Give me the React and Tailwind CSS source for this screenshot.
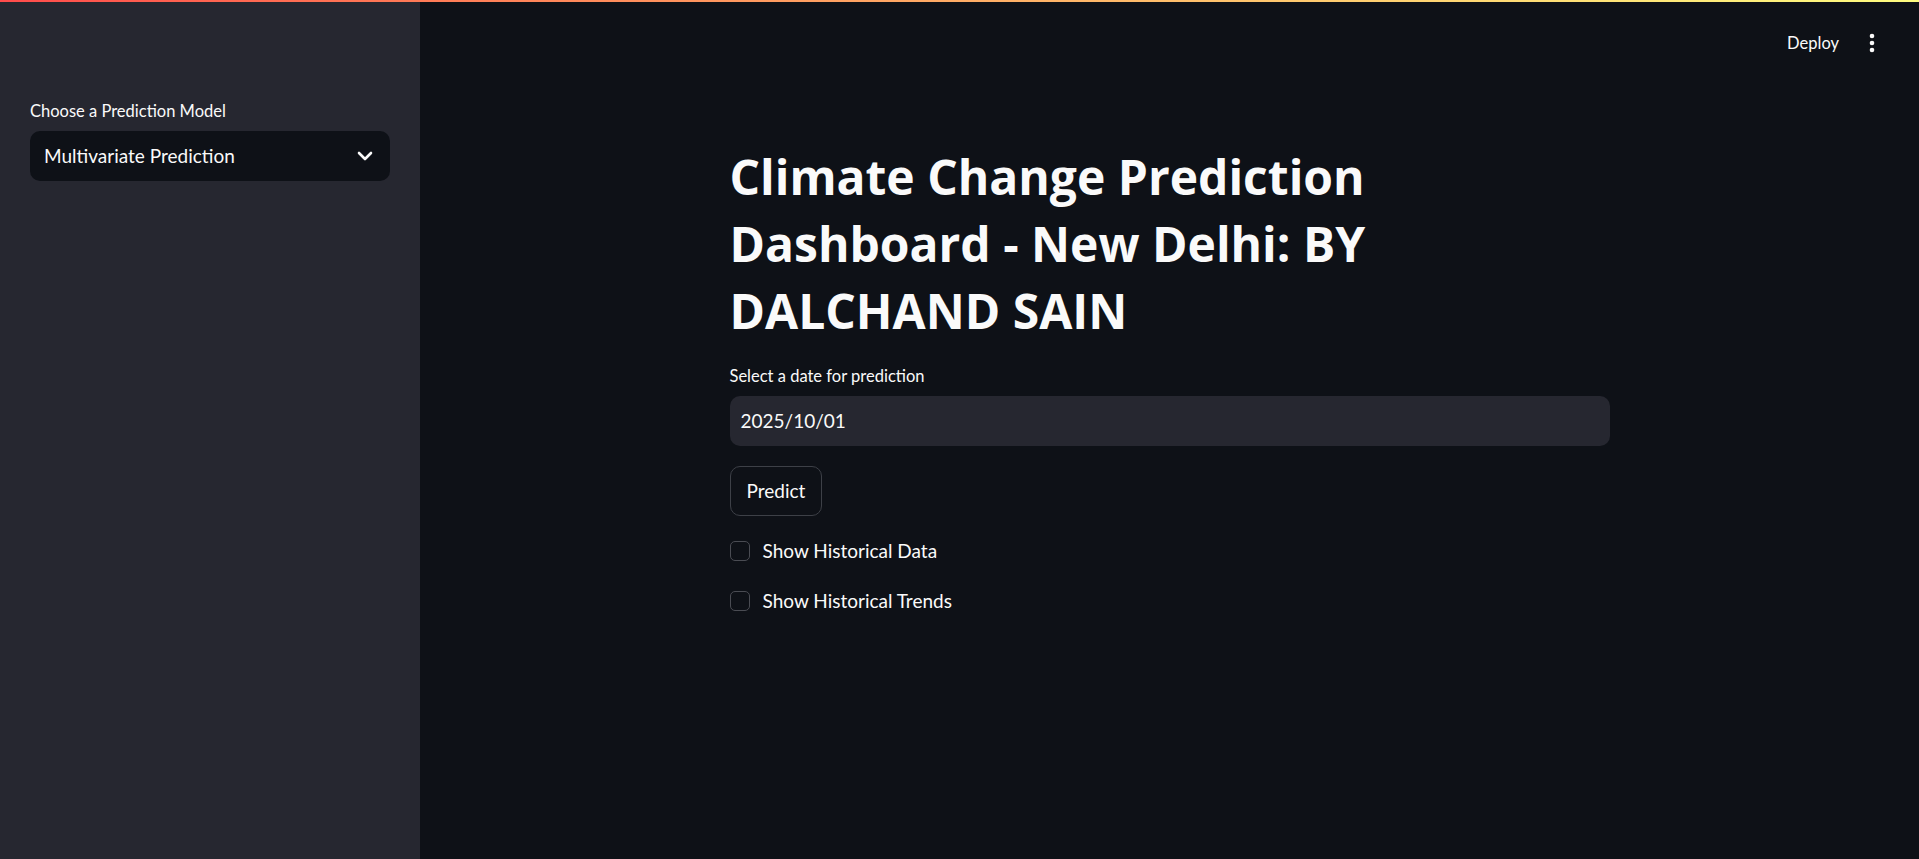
import React from 'react';

const ChevronDown = () => (
    <svg width="16" height="10" viewBox="0 0 16 10" fill="none">
        <path d="M2 2l6 6 6-6" stroke="#fafafa" strokeWidth="2.6" strokeLinecap="round" strokeLinejoin="round" />
    </svg>
);

const Kebab = () => (
    <svg width="6" height="20" viewBox="0 0 6 20" fill="#fafafa">
        <circle cx="3" cy="3" r="2.3" />
        <circle cx="3" cy="10" r="2.3" />
        <circle cx="3" cy="17" r="2.3" />
    </svg>
);

const Checkbox = ({ label }) => (
    <label className="flex items-center h-[30px] gap-[13px] cursor-pointer">
        <span className="w-[20px] h-[20px] rounded-[5px] border border-[#4a4c53] bg-[#0e1117]" />
        <span className="text-[19px] text-[#fafafa] leading-[30px]">{label}</span>
    </label>
);

const App = () => {
    return (
        <div className="flex flex-col h-screen w-full bg-[#0e1117] font-[Lato,sans-serif] text-[#fafafa] overflow-hidden">
            {/* top decoration */}
            <div className="h-[2px] w-full shrink-0 bg-gradient-to-r from-[#ff4b4b] to-[#fffd80]" />

            <div className="flex flex-1 min-h-0">
                {/* sidebar */}
                <aside className="w-[420px] shrink-0 bg-[#262730] px-[30px] pt-[98px]">
                    <div className="text-[16.5px] leading-[22px] mb-[9px]">Choose a Prediction Model</div>
                    <div className="h-[50px] rounded-[10px] bg-[#0e1117] flex items-center justify-between pl-[14px] pr-[17px]">
                        <span className="text-[19px]">Multivariate Prediction</span>
                        <ChevronDown />
                    </div>
                </aside>

                {/* main */}
                <main className="flex-1 flex flex-col">
                    <header className="h-[82px] shrink-0 flex items-center justify-end pr-[44px] gap-[30px]">
                        <span className="text-[16.5px]">Deploy</span>
                        <Kebab />
                    </header>

                    <div className="w-[880px] mx-auto pt-[59px]">
                        <h1 className="font-['Open_Sans',sans-serif] text-[48px] leading-[67px] font-bold w-[720px]">
                            Climate Change Prediction Dashboard - New Delhi: BY DALCHAND SAIN
                        </h1>

                        <div className="mt-[21px] text-[16.5px] leading-[22px] mb-[9px]">Select a date for prediction</div>
                        <div className="h-[50px] rounded-[10px] bg-[#262730] flex items-center px-[11px]">
                            <span className="text-[19px]">2025/10/01</span>
                        </div>

                        <button className="mt-[20px] h-[50px] px-[16px] rounded-[10px] border border-[#3d4047] bg-[#0e1117] text-[19px] text-[#fafafa]">
                            Predict
                        </button>

                        <div className="mt-[20px] flex flex-col gap-[20px]">
                            <Checkbox label="Show Historical Data" />
                            <Checkbox label="Show Historical Trends" />
                        </div>
                    </div>
                </main>
            </div>
        </div>
    );
};

export default App;
